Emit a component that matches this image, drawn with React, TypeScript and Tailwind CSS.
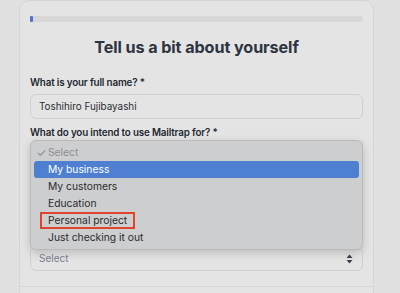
import React from "react"

const options = ["My business", "My customers", "Education", "Personal project", "Just checking it out"]

function UpDown() {
  return (
    <svg width="7" height="10" viewBox="0 0 7 10" className="shrink-0">
      <path d="M3.5 0.5 L6.5 4 H0.5 Z" fill="#3b3f46" />
      <path d="M3.5 9.5 L6.5 6 H0.5 Z" fill="#3b3f46" />
    </svg>
  )
}

export default function App() {
  return (
    <div
      className="w-[400px] h-[293px] overflow-hidden bg-[#e1e1e1] pl-[19px] pt-0"
      style={{ fontFamily: "Inter, 'Noto Sans', sans-serif" }}
    >
      <div className="w-[355px] h-[300px] bg-[#e4e4e4] border border-[#d5d5d5] rounded-t-[10px] px-[10px] pt-[15px]">
        {/* progress */}
        <div className="h-[6px] bg-[#d7d7d7] rounded-[2px] flex">
          <div className="w-[3px] h-full bg-[#4f73d6] rounded-[1px]" />
        </div>

        <h1 className="mt-[15px] text-center text-[16.2px] leading-[20px] font-bold text-[#2d3441] tracking-[-0.1px]">
          Tell us a bit about yourself
        </h1>

        <label className="block mt-[19px] text-[9.8px] leading-[14px] font-semibold text-[#22272f] tracking-[-0.15px]">
          What is your full name? *
        </label>
        <div className="mt-[4px] h-[25px] rounded-[6px] border border-[#cfcfcf] bg-[#e4e4e4] flex items-center px-[8px] text-[9.9px] text-[#2b2e33]">
          Toshihiro Fujibayashi
        </div>

        <label className="block mt-[7px] text-[9.8px] leading-[13px] font-semibold text-[#22272f] tracking-[-0.15px]">
          What do you intend to use Mailtrap for? *
        </label>

        {/* open native menu */}
        <div className="relative z-10 mt-[1px] rounded-[6px] border border-[#b9baba] bg-[#cdcecf] shadow-[0_3px_10px_rgba(0,0,0,0.18)] pt-[3px] pb-[3px] px-[3px] text-[10.3px] text-[#2a2b2d]">
          <div className="h-[17px] flex items-center pl-[2px] text-[#8c8d8f]">
            <span className="w-[12px] text-[12px] leading-[12px]">✓</span>
            <span>Select</span>
          </div>
          {options.map((o, i) => (
            <div
              key={o}
              className={
                i === 0
                  ? "h-[17px] flex items-center pl-[14px] rounded-[3px] bg-[#4f7fd1] text-white"
                  : "h-[17px] flex items-center pl-[14px]"
              }
            >
              {o === "Personal project" ? (
                <span className="-ml-[8px] h-[17px] flex items-center px-[6px] border-2 border-[#e2432c]">{o}</span>
              ) : (
                o
              )}
            </div>
          ))}
        </div>

        <div className="-mt-[4px] h-[25px] rounded-[6px] border border-[#cfcfcf] bg-[#e4e4e4] flex items-center justify-between pl-[8px] pr-[9px] text-[10px] text-[#7c8190]">
          <span>Select</span>
          <UpDown />
        </div>

        <div className="-mx-[10px] mt-[15px] border-t border-[#d6d6d6]" />
      </div>
    </div>
  )
}
